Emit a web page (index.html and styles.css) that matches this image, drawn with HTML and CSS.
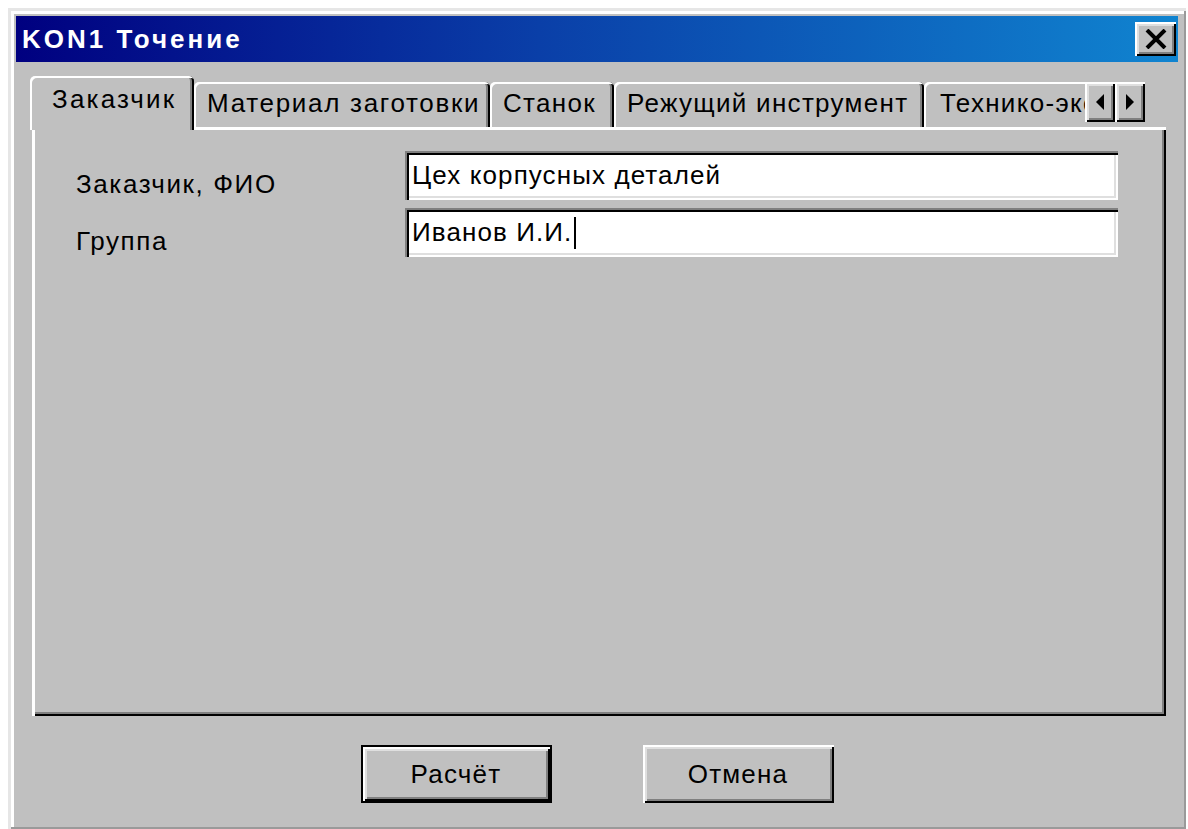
FILE: index.html
```html
<!DOCTYPE html>
<html lang="ru">
<head>
<meta charset="utf-8">
<title>KON1 Точение</title>
<link rel="stylesheet" href="styles.css">
</head>
<body>
<div class="window">
  <div class="titlebar">
    <span class="title">KON1 Точение</span>
    <div class="close-btn">
      <svg width="24" height="20" viewBox="0 0 24 20"><path d="M3 1 L21 19 M21 1 L3 19" stroke="#000" stroke-width="4" fill="none"/></svg>
    </div>
  </div>

  <div class="tabstrip">
    <div class="tabs">
      <div class="tab active tab-customer">Заказчик</div>
      <div class="tab tab-material">Материал заготовки</div>
      <div class="tab tab-machine">Станок</div>
      <div class="tab tab-tool">Режущий инструмент</div>
      <div class="tab tab-economy">Технико-экономические показатели</div>
    </div>
    <div class="scroller">
      <div class="arrow-btn">
        <svg width="8" height="16" viewBox="0 0 8 16"><path d="M8 0 L0 8 L8 16 Z" fill="#000"/></svg>
      </div>
      <div class="arrow-btn">
        <svg width="8" height="16" viewBox="0 0 8 16"><path d="M0 0 L8 8 L0 16 Z" fill="#000"/></svg>
      </div>
    </div>
  </div>

  <div class="panel">
    <div class="form">
      <label class="field-label">Заказчик, ФИО</label>
      <div class="textbox">Цех корпусных деталей</div>
      <label class="field-label">Группа</label>
      <div class="textbox">Иванов И.И.<span class="caret"></span></div>
    </div>
  </div>

  <div class="actions">
    <button class="btn btn-default">Расчёт</button>
    <button class="btn">Отмена</button>
  </div>
</div>
</body>
</html>
```

FILE: styles.css
```css
html, body {
  margin: 0;
  padding: 0;
  background: #ffffff;
}

body {
  font-family: "Liberation Sans", Arial, sans-serif;
  font-size: 26px;
  color: #000;
}

/* dialog frame */
.window {
  margin: 8px 2px 0 8px;
  width: 1178px;
  height: 821px;
  box-sizing: border-box;
  padding: 8px 8px 0 8px;
  background: #c0c0c0;
  box-shadow:
    inset 3px 3px #e6e6e6,
    inset -2px -2px #9a9a9a,
    inset 6px 6px #ffffff;
  display: flex;
  flex-direction: column;
}

/* caption */
.titlebar {
  height: 46px;
  display: flex;
  align-items: center;
  justify-content: space-between;
  padding: 0 2px 0 6px;
  background: linear-gradient(to right, #000080 0%, #0a3fa8 45%, #1084d0 100%);
}

.title {
  color: #fff;
  font-weight: bold;
  font-size: 26px;
  letter-spacing: 3px;
}

.close-btn {
  width: 41px;
  height: 34px;
  box-sizing: border-box;
  background: #c0c0c0;
  display: flex;
  align-items: center;
  justify-content: center;
  box-shadow:
    inset 2px 2px #ffffff,
    inset -2px -2px #000000,
    inset 4px 4px #dfdfdf,
    inset -4px -4px #808080;
}

/* tab headers */
.tabstrip {
  margin: 14px 0 0 14px;
  height: 51px;
  display: flex;
  align-items: flex-end;
  position: relative;
  z-index: 1;
}

.tabs {
  width: 1055px;
  overflow: hidden;
  display: flex;
  align-items: flex-end;
  height: 54px;
  margin-bottom: -3px;
}

.tab {
  flex-shrink: 0;
  height: 45px;
  box-sizing: border-box;
  padding: 0 0 3px 13px;
  margin-bottom: 3px;
  display: flex;
  align-items: center;
  white-space: nowrap;
  letter-spacing: 1.3px;
  background: #c0c0c0;
  border-radius: 5px 5px 0 0;
  box-shadow:
    inset 2px 2px #ffffff,
    inset -2px 0 #000000,
    inset -4px 0 #808080;
}

.tab.active {
  height: 54px;
  margin-bottom: 0;
  padding: 0 0 8px 22px;
  letter-spacing: 2.2px;
}

.tab-customer { width: 164px; }
.tab-material { width: 296px; letter-spacing: 1.7px; }
.tab-machine { width: 124px; }
.tab-tool { width: 310px; }
.tab-economy { width: 400px; padding-left: 16px; }

.scroller {
  display: flex;
  align-self: flex-start;
  margin-top: 6px;
}

.arrow-btn {
  width: 30px;
  height: 40px;
  box-sizing: border-box;
  background: #c0c0c0;
  display: flex;
  align-items: center;
  justify-content: center;
  box-shadow:
    inset 2px 2px #ffffff,
    inset -2px -2px #000000,
    inset 4px 4px #dfdfdf,
    inset -4px -4px #808080;
}

/* page body */
.panel {
  margin: 0 12px 0 16px;
  height: 589px;
  box-sizing: border-box;
  padding: 24px 48px 0 44px;
  background: #c0c0c0;
  box-shadow:
    inset 3px 3px #ffffff,
    inset -2px -2px #000000,
    inset -4px -4px #808080;
}

.form {
  display: grid;
  grid-template-columns: 329px 1fr;
  row-gap: 8px;
}

.field-label {
  padding-top: 18px;
  letter-spacing: 1.6px;
}

.textbox {
  height: 49px;
  box-sizing: border-box;
  padding: 0 7px;
  display: flex;
  align-items: center;
  background: #fff;
  white-space: nowrap;
  letter-spacing: 1.1px;
  box-shadow:
    inset 2px 2px #808080,
    inset 4px 4px #000000,
    inset -2px -2px #ffffff,
    inset -4px -4px #dfdfdf;
}

.caret {
  display: inline-block;
  width: 2px;
  height: 32px;
  background: #000;
  margin-left: 2px;
}

/* command buttons */
.actions {
  margin-top: 29px;
  display: flex;
  justify-content: center;
  gap: 91px;
}

.btn {
  width: 191px;
  height: 58px;
  font-family: inherit;
  font-size: 26px;
  letter-spacing: 1.2px;
  color: #000;
  background: #c0c0c0;
  border: none;
  padding: 0;
  box-shadow:
    inset 2px 2px #ffffff,
    inset -2px -2px #000000,
    inset 4px 4px #dfdfdf,
    inset -4px -4px #808080;
}

.btn-default {
  box-shadow:
    inset 0 0 0 2px #000000,
    inset 4px 4px #ffffff,
    inset -4px -4px #000000,
    inset 6px 6px #dfdfdf,
    inset -6px -6px #808080;
}
```
